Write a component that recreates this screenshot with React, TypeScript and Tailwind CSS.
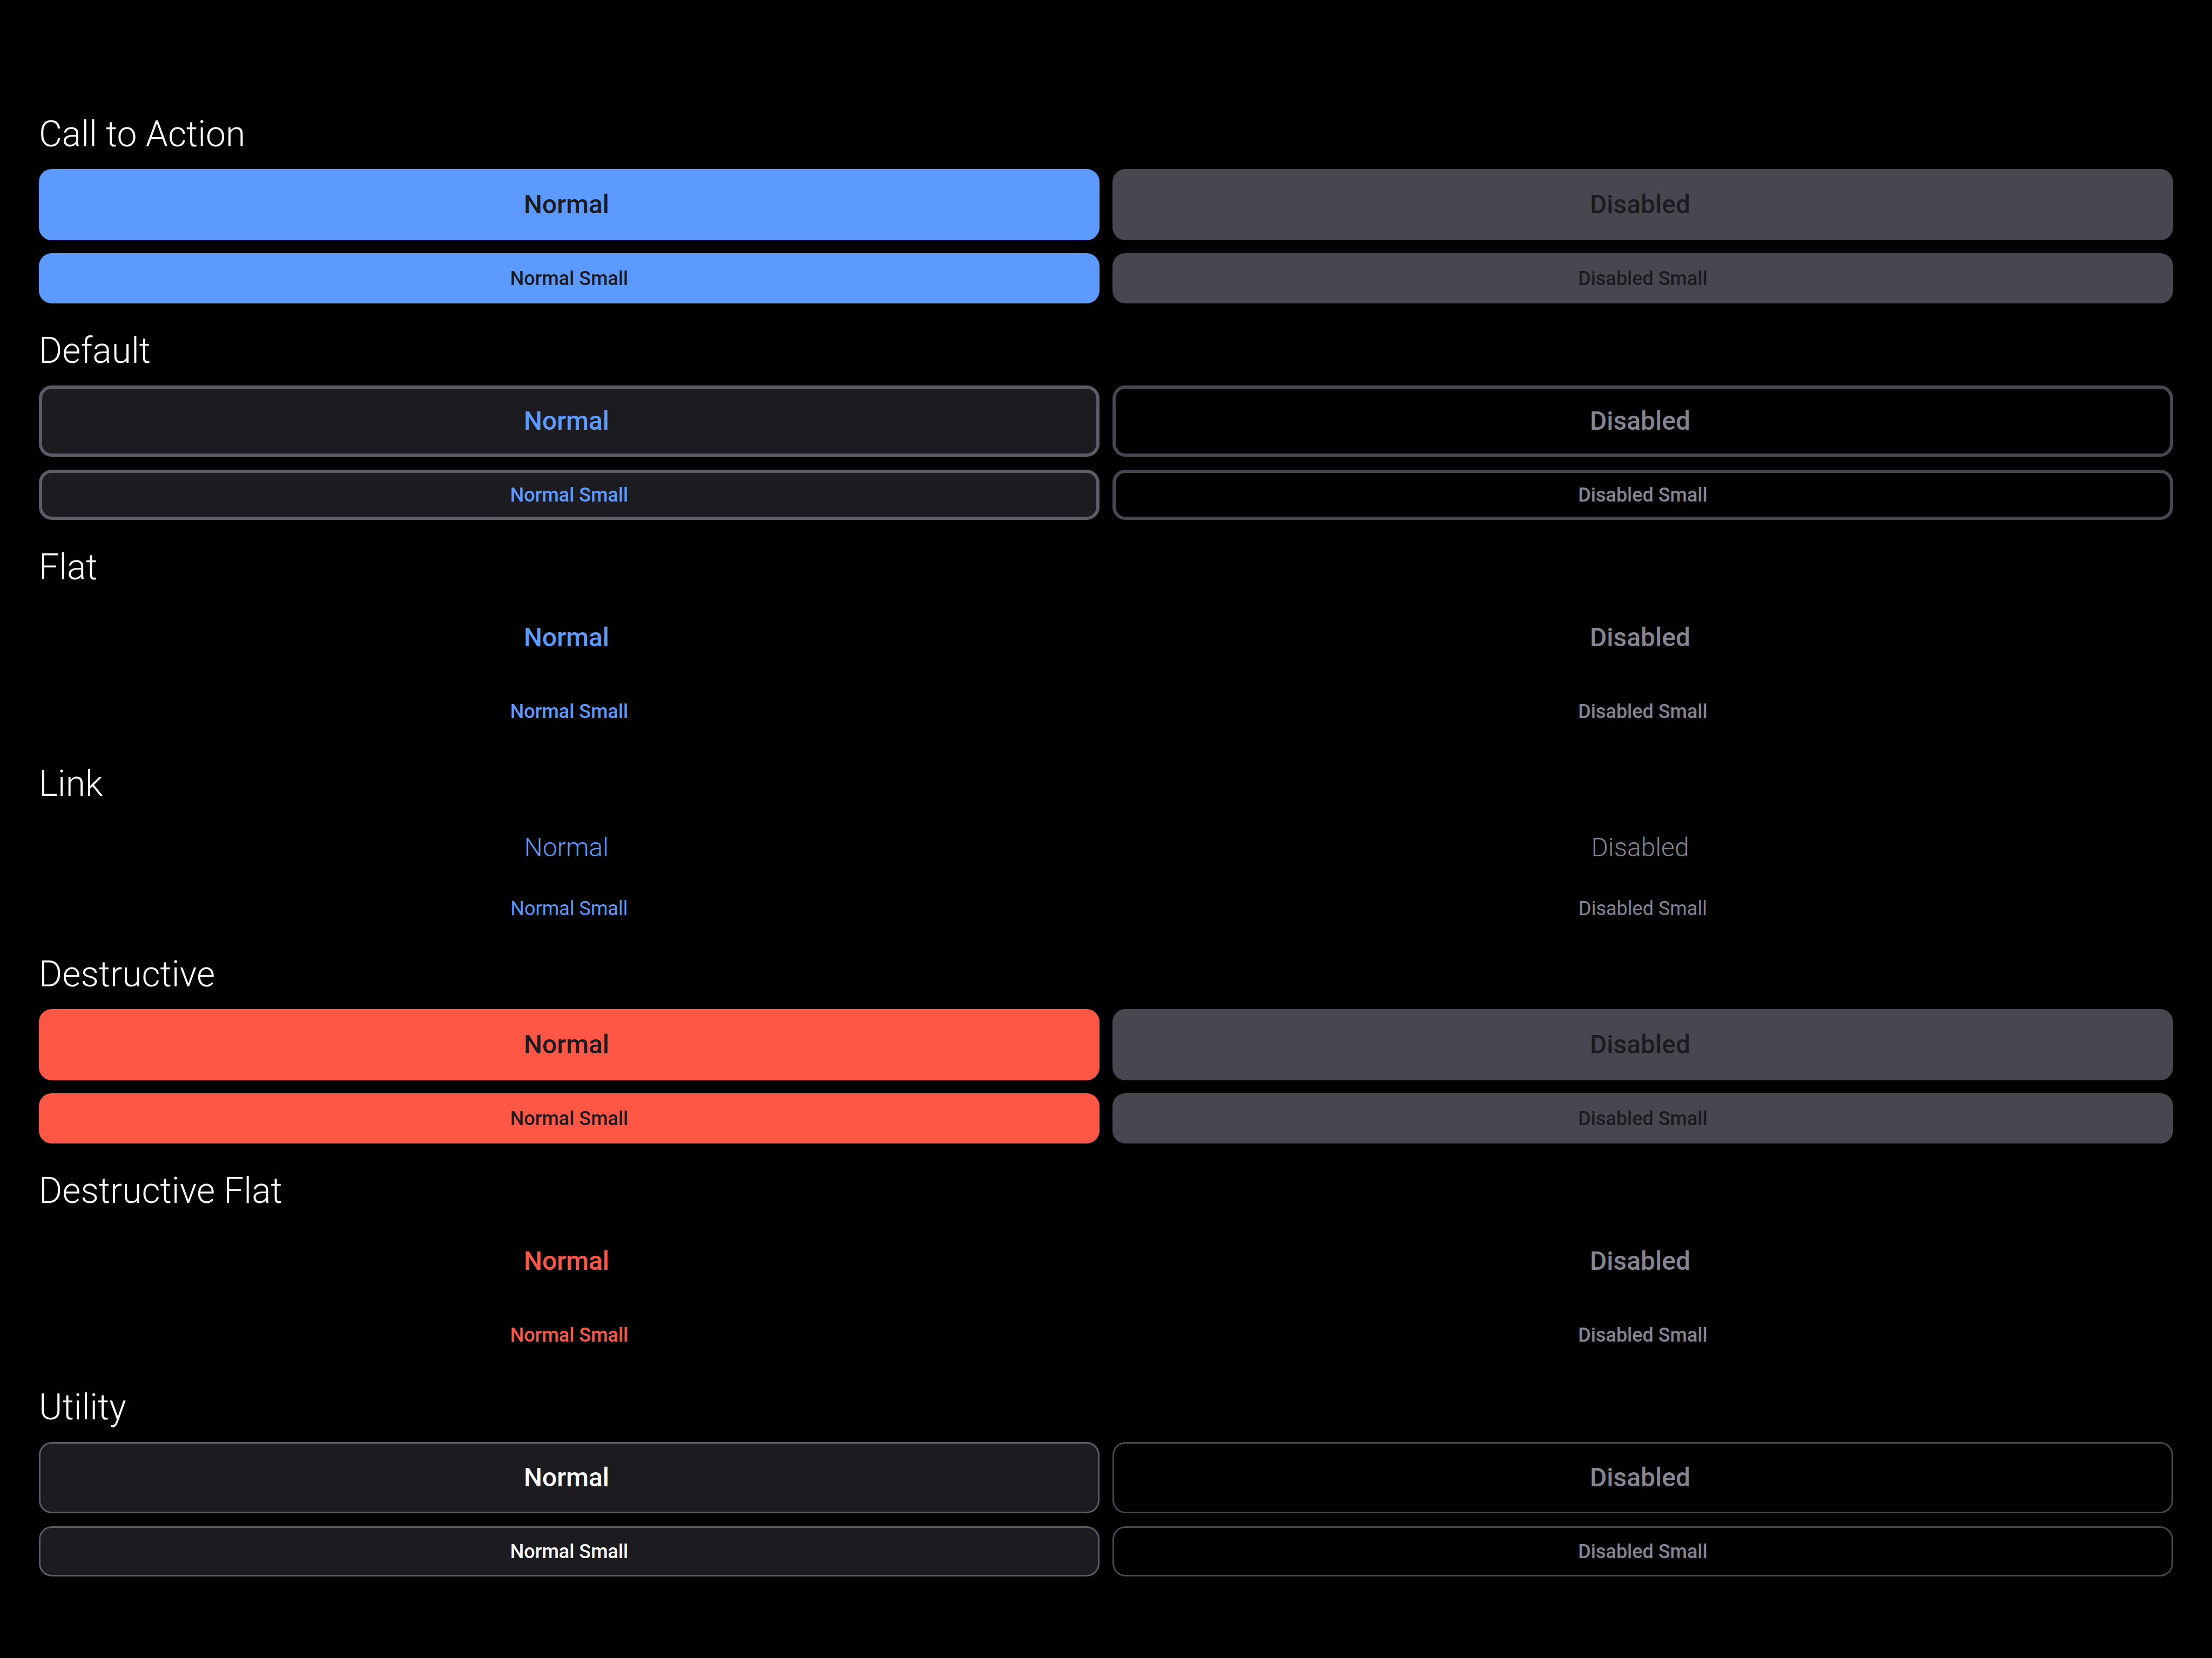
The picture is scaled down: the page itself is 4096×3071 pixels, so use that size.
type Size = 'large' | 'small'

type Variant = {
  title: string
  normal: string
  disabled: string
  largeBox: string
  smallBox: string
}

const REGULAR_LARGE = 'h-[132px] text-[48px] font-medium'
const REGULAR_SMALL = 'h-[93px] text-[36px] font-medium'

const VARIANTS: Variant[] = [
  {
    title: 'Call to Action',
    normal: 'bg-[#5c9aff] text-[#1c1b1f]',
    disabled: 'bg-[#48474f] text-[#1c1b1f]',
    largeBox: REGULAR_LARGE,
    smallBox: REGULAR_SMALL,
  },
  {
    title: 'Default',
    normal: 'border-[6px] border-[#5d5c66] bg-[#1c1b1f] text-[#5c9aff]',
    disabled: 'border-[6px] border-[#48474f] text-[#858490]',
    largeBox: REGULAR_LARGE,
    smallBox: REGULAR_SMALL,
  },
  {
    title: 'Flat',
    normal: 'text-[#5c9aff]',
    disabled: 'text-[#858490]',
    largeBox: REGULAR_LARGE,
    smallBox: REGULAR_SMALL,
  },
  {
    title: 'Link',
    normal: 'text-[#5c9aff]',
    disabled: 'text-[#858490]',
    largeBox: 'h-[108px] text-[48px] font-light',
    smallBox: 'h-[69px] text-[36px] font-normal',
  },
  {
    title: 'Destructive',
    normal: 'bg-[#ff5745] text-[#1c1b1f]',
    disabled: 'bg-[#48474f] text-[#1c1b1f]',
    largeBox: REGULAR_LARGE,
    smallBox: REGULAR_SMALL,
  },
  {
    title: 'Destructive Flat',
    normal: 'text-[#ff5745]',
    disabled: 'text-[#858490]',
    largeBox: REGULAR_LARGE,
    smallBox: REGULAR_SMALL,
  },
  {
    title: 'Utility',
    normal: 'border-[3px] border-[#5d5c66] bg-[#1c1b1f] text-white',
    disabled: 'border-[3px] border-[#48474f] text-[#858490]',
    largeBox: REGULAR_LARGE,
    smallBox: REGULAR_SMALL,
  },
]

function ShowcaseButton({ variant, size, disabled = false }: { variant: Variant; size: Size; disabled?: boolean }) {
  const box = size === 'large' ? `${variant.largeBox} pr-[10px]` : variant.smallBox
  const tone = disabled ? variant.disabled : variant.normal
  const label = (disabled ? 'Disabled' : 'Normal') + (size === 'small' ? ' Small' : '')
  return (
    <button
      type="button"
      disabled={disabled}
      className={`flex w-full items-center justify-center rounded-[24px] leading-none ${box} ${tone}`}
    >
      {label}
    </button>
  )
}

function Section({ variant }: { variant: Variant }) {
  return (
    <section>
      <h2 className="pt-12 pb-6 text-[66px] leading-[80px] font-light text-white">{variant.title}</h2>
      <div className="grid grid-cols-2 gap-6">
        <ShowcaseButton variant={variant} size="large" />
        <ShowcaseButton variant={variant} size="large" disabled />
        <ShowcaseButton variant={variant} size="small" />
        <ShowcaseButton variant={variant} size="small" disabled />
      </div>
    </section>
  )
}

export default function App() {
  return (
    <main className="min-h-screen bg-black px-[72px] pt-[161px] pb-12 font-['Roboto',sans-serif]">
      {VARIANTS.map((variant) => (
        <Section key={variant.title} variant={variant} />
      ))}
    </main>
  )
}
